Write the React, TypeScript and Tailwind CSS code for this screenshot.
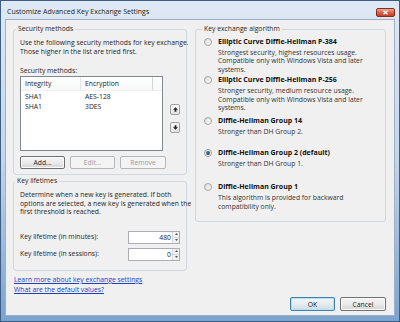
import React from "react";

function Radio({ checked }: { checked?: boolean }) {
  return (
    <span className="mt-[1px] w-[8px] h-[8px] shrink-0 rounded-full border border-[#a3a3a3] bg-linear-to-br from-[#dcdcdc] to-[#fbfbfb] flex items-center justify-center">
      {checked && <span className="w-[4px] h-[4px] rounded-full bg-linear-to-br from-[#5a86b5] to-[#1d3f66]" />}
    </span>
  );
}

function Item({
  title,
  lines,
  checked,
  className,
}: {
  title: string;
  lines: string[];
  checked?: boolean;
  className?: string;
}) {
  return (
    <div className={"flex gap-[6px] " + (className ?? "")}>
      <Radio checked={checked} />
      <div className="flex flex-col whitespace-nowrap">
        <div className="font-bold text-[7px] leading-[10px] text-[#111]">{title}</div>
        <div className="mt-[2px] leading-[8.4px] text-[#333]">
          {lines.map((l) => (
            <div key={l}>{l}</div>
          ))}
        </div>
      </div>
    </div>
  );
}

function ArrowBtn({ down }: { down?: boolean }) {
  return (
    <div className="w-[10px] h-[11px] rounded-[2px] border border-[#a0a0a0] bg-linear-to-b from-[#fafafa] to-[#e2e2e2] flex items-center justify-center">
      <svg width="5" height="5" viewBox="0 0 5 5" className={down ? "rotate-180" : ""}>
        <path d="M2.5 0.3 L5 2.8 H3.4 V4.8 H1.6 V2.8 H0 Z" fill="#222" />
      </svg>
    </div>
  );
}

function Spin({ value }: { value: string }) {
  return (
    <div className="w-[52px] h-[13px] shrink-0 border border-[#abadb3] bg-white flex">
      <div className="flex-1 text-right pr-[1px] leading-[11px]">{value}</div>
      <div className="w-[7px] flex flex-col border-l border-[#d8d8d8]">
        <div className="flex-1 flex items-center justify-center bg-[#f2f2f2]">
          <svg width="3" height="2" viewBox="0 0 3 2">
            <path d="M0 2 L1.5 0 L3 2 Z" fill="#555" />
          </svg>
        </div>
        <div className="flex-1 flex items-center justify-center bg-[#f2f2f2] border-t border-[#d8d8d8]">
          <svg width="3" height="2" viewBox="0 0 3 2">
            <path d="M0 0 L1.5 2 L3 0 Z" fill="#555" />
          </svg>
        </div>
      </div>
    </div>
  );
}

function Btn({
  children,
  className,
  disabled,
  def,
}: {
  children: React.ReactNode;
  className?: string;
  disabled?: boolean;
  def?: boolean;
}) {
  const base =
    "h-[13px] rounded-[2px] border flex items-center justify-center leading-[11px] ";
  const look = disabled
    ? "border-[#b5b8bb] bg-[#f4f4f4] text-[#9a9a9a]"
    : def
    ? "border-[#3c7fb1] bg-linear-to-b from-[#f2f6f9] via-[#e6ecf1] to-[#d0dbe3] shadow-[inset_0_0_0_1px_#b8e0f8]"
    : "border-[#707070] bg-linear-to-b from-[#f4f4f4] via-[#ebebeb] to-[#d4d4d4] shadow-[inset_0_0_0_1px_#fbfbfb]";
  return <div className={base + look + " " + (className ?? "")}>{children}</div>;
}

export default function App() {
  return (
    <div className="w-[400px] h-[322px] flex flex-col font-['Open_Sans',sans-serif] text-[6.8px] text-[#1e1e1e] bg-linear-to-b from-[#dfe9f5] via-[#c2d5ea] to-[#7aa3cf] border border-[#3d5f86] overflow-hidden">
      {/* title bar */}
      <div className="h-[18px] shrink-0 flex items-start justify-between pl-[6px] pr-[4px]">
        <span className="mt-[6px] text-[7px] leading-[10px] text-[#1c1c1c] whitespace-nowrap">
          Customize Advanced Key Exchange Settings
        </span>
        <div className="mt-[7px] w-[19px] h-[9px] rounded-[2px] border border-[#8c2a1a] bg-linear-to-b from-[#eba695] via-[#d8644a] to-[#c33e24] flex items-center justify-center">
          <svg width="7" height="5" viewBox="0 0 7 5">
            <path d="M1.5 0.8 L5.5 4.2 M5.5 0.8 L1.5 4.2" stroke="#fff" strokeWidth="1.3" />
          </svg>
        </div>
      </div>

      {/* client area */}
      <div className="mx-[4px] mb-[5px] flex-1 bg-[#f0f0f0] border border-[#9db0c6] flex flex-col pl-[7px] pr-[8px] pt-[4px] pb-[4px]">
        <div className="flex gap-[8px]">
          {/* left column */}
          <div className="w-[174px] shrink-0 flex flex-col whitespace-nowrap">
            <fieldset className="min-w-0 w-[174px] h-[151px] border border-[#d0d7de] rounded-[3px]">
              <legend className="ml-[2px] px-[2px] leading-[10px]">Security methods</legend>
              <div className="px-[6px] pt-[4px] flex flex-col">
                <div className="leading-[9px]">
                  <div>Use the following security methods for key exchange.</div>
                  <div>Those higher in the list are tried first.</div>
                </div>
                <div className="mt-[10px] leading-[9px]">Security methods:</div>
                <div className="mt-[1px] flex items-start">
                  <div className="w-[147px] h-[75px] border border-[#828790] bg-white flex flex-col">
                    <div className="h-[14px] flex border-b border-[#f0f0f0] bg-linear-to-b from-[#ffffff] to-[#f7f8f9]">
                      <div className="w-[60px] pl-[4px] leading-[13px] border-r border-[#e3e5e8]">Integrity</div>
                      <div className="w-[72px] pl-[4px] leading-[13px] border-r border-[#d5d5d5]">Encryption</div>
                      <div className="flex-1" />
                    </div>
                    <div className="mt-[1px] h-[10px] flex leading-[10px]">
                      <div className="w-[60px] pl-[4px]">SHA1</div>
                      <div className="pl-[4px]">AES-128</div>
                    </div>
                    <div className="h-[10px] flex leading-[10px]">
                      <div className="w-[60px] pl-[4px]">SHA1</div>
                      <div className="pl-[4px]">3DES</div>
                    </div>
                  </div>
                  <div className="ml-[7px] mt-[28px] flex flex-col gap-[7px]">
                    <ArrowBtn />
                    <ArrowBtn down />
                  </div>
                </div>
                <div className="mt-[5px] flex gap-[5px]">
                  <Btn className="w-[45px]">Add...</Btn>
                  <Btn className="w-[45px]" disabled>
                    Edit...
                  </Btn>
                  <Btn className="w-[46px]" disabled>
                    Remove
                  </Btn>
                </div>
              </div>
            </fieldset>

            <fieldset className="min-w-0 w-[174px] mt-[1px] h-[95px] border border-[#d0d7de] rounded-[3px]">
              <legend className="ml-[1px] px-[2px] leading-[10px]">Key lifetimes</legend>
              <div className="px-[6px] pt-[5px] flex flex-col">
                <div className="leading-[8.5px]">
                  <div>Determine when a new key is generated. If both</div>
                  <div>options are selected, a new key is generated when the</div>
                  <div>first threshold is reached.</div>
                </div>
                <div className="mt-[14px] h-[13px] flex items-center justify-between">
                  <span className="leading-[10px]">Key lifetime (in minutes):</span>
                  <Spin value="480" />
                </div>
                <div className="mt-[4px] h-[13px] flex items-center justify-between">
                  <span className="leading-[10px]">Key lifetime (in sessions):</span>
                  <Spin value="0" />
                </div>
              </div>
            </fieldset>

            <div className="mt-[4px] pl-[1px] flex flex-col items-start leading-[10px] text-[#1a3fc4]">
              <span className="underline">Learn more about key exchange settings</span>
              <span className="underline">What are the default values?</span>
            </div>
          </div>

          {/* right column */}
          <fieldset className="min-w-0 w-[191px] h-[198px] border border-[#d0d7de] rounded-[3px]">
            <legend className="ml-[6px] px-[2px] leading-[10px]">Key exchange algorithm</legend>
            <div className="pl-[8px] pt-[3px] flex flex-col">
              <Item
                title="Elliptic Curve Diffie-Hellman P-384"
                lines={[
                  "Strongest security, highest resources usage.",
                  "Compatible only with Windows Vista and later",
                  "systems.",
                ]}
              />
              <Item
                className="mt-[1px]"
                title="Elliptic Curve Diffie-Hellman P-256"
                lines={[
                  "Stronger security, medium resource usage.",
                  "Compatible only with Windows Vista and later",
                  "systems.",
                ]}
              />
              <Item className="mt-[4px]" title="Diffie-Hellman Group 14" lines={["Stronger than DH Group 2."]} />
              <Item
                className="mt-[11px]"
                checked
                title="Diffie-Hellman Group 2 (default)"
                lines={["Stronger than DH Group 1."]}
              />
              <Item
                className="mt-[14px]"
                title="Diffie-Hellman Group 1"
                lines={["This algorithm is provided for backward", "compatibility only."]}
              />
            </div>
          </fieldset>
        </div>

        <div className="mt-auto flex justify-end gap-[5px]">
          <Btn className="w-[45px] h-[14px]" def>
            OK
          </Btn>
          <Btn className="w-[46px] h-[14px]">Cancel</Btn>
        </div>
      </div>
    </div>
  );
}
